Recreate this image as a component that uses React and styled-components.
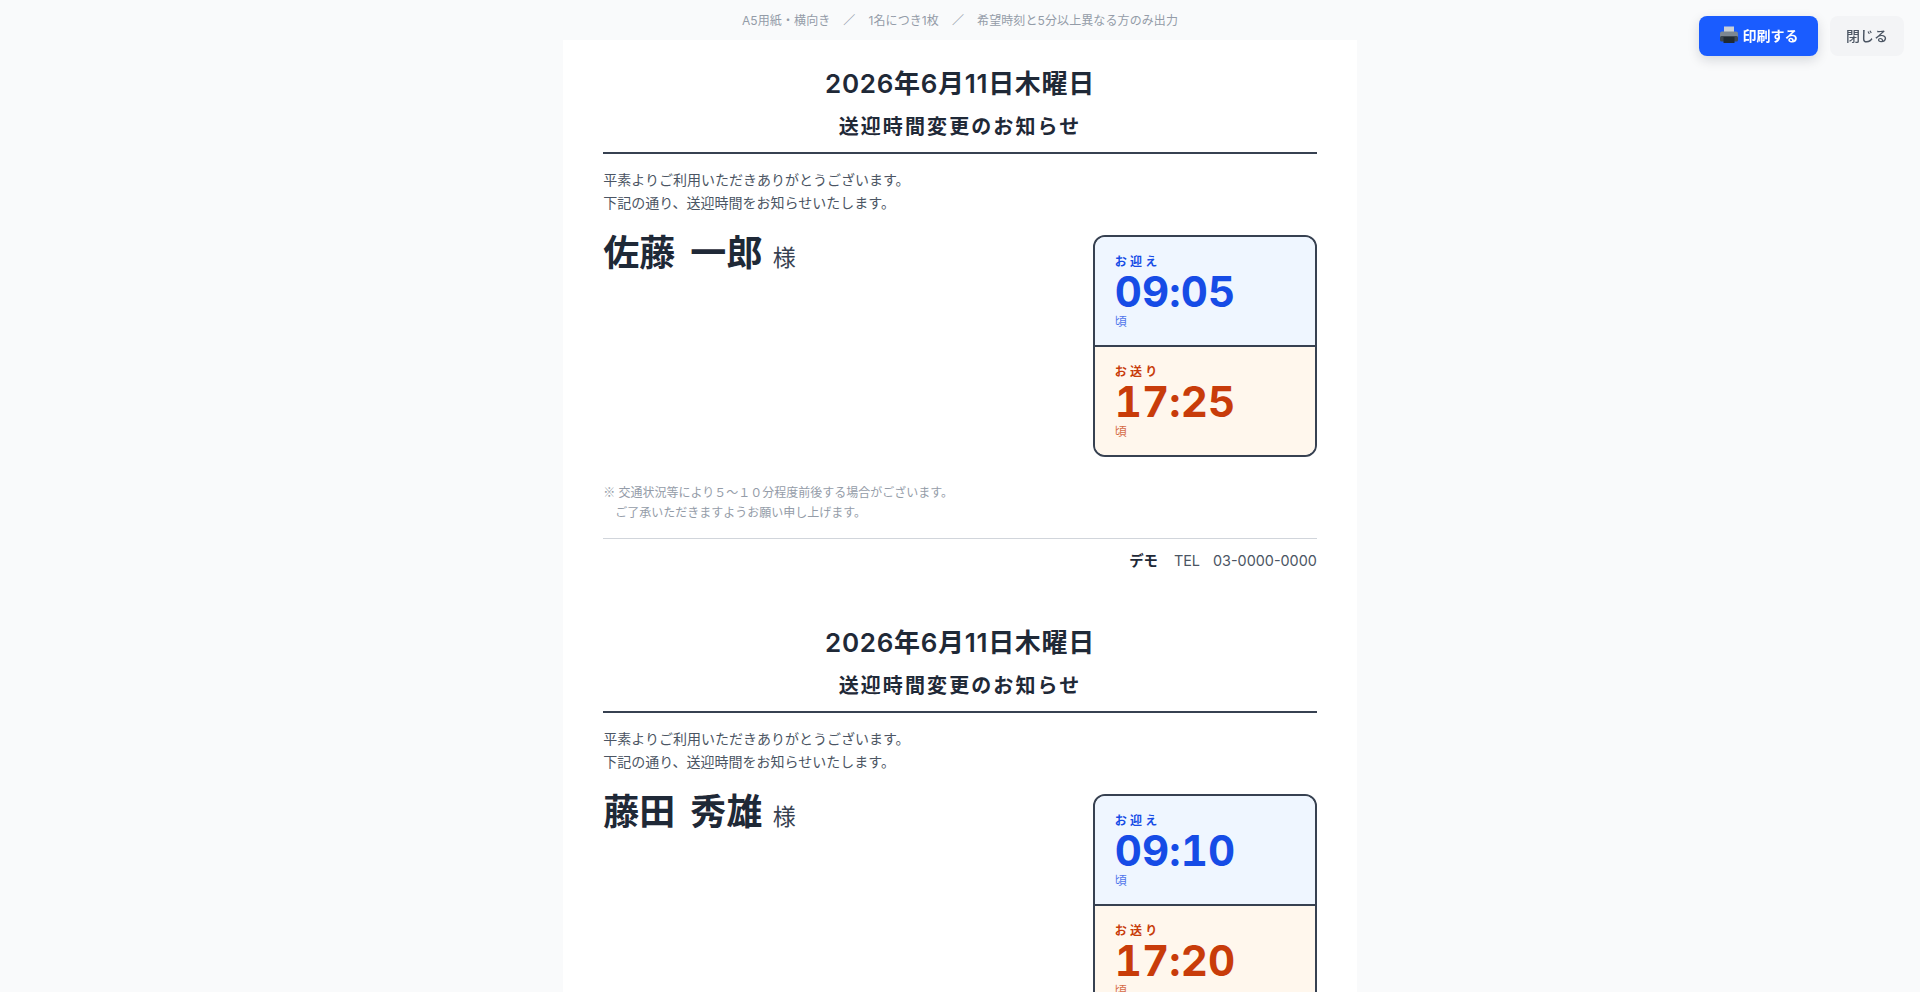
import React from 'react';
import styled, { createGlobalStyle } from 'styled-components';

const GlobalStyle = createGlobalStyle`
  * { box-sizing: border-box; }
  html, body { margin: 0; padding: 0; background: #f9fafb; }
  body {
    font-family: Inter, "Noto Sans CJK JP", sans-serif;
    color: #1f2937;
    overflow: hidden;
    height: 992px;
  }
`;

const Toolbar = styled.div`
  position: fixed;
  top: 16px;
  right: 16px;
  display: flex;
  gap: 12px;
  z-index: 10;
`;

const PrintButton = styled.button`
  height: 40px;
  width: 119px;
  padding: 0 0 2px;
  display: flex;
  align-items: center;
  justify-content: center;
  gap: 4px;
  border: none;
  border-radius: 8px;
  background: #1a5cff;
  color: #fff;
  font: 600 14px Inter, "Noto Sans CJK JP", sans-serif;
  box-shadow: 0 4px 12px rgba(15, 23, 42, 0.15);
`;

const CloseButton = styled.button`
  height: 40px;
  width: 74px;
  padding: 0 0 2px;
  border: none;
  border-radius: 8px;
  background: #f3f4f6;
  color: #4b5563;
  font: 500 14px Inter, "Noto Sans CJK JP", sans-serif;
`;

const Hint = styled.div`
  height: 40px;
  padding-bottom: 2px;
  display: flex;
  align-items: center;
  justify-content: center;
  gap: 13px;
  font-size: 12px;
  letter-spacing: 0.1px;
  color: #949ca8;
`;

const Sheets = styled.main`
  display: flex;
  flex-direction: column;
  align-items: center;
`;

const Sheet = styled.section`
  width: 210mm;
  height: 148mm;
  flex-shrink: 0;
  padding: 26px 40px 0;
  background: #fff;
`;

const DateLine = styled.div`
  text-align: center;
  font-size: 26px;
  line-height: 36px;
  font-weight: 600;
  letter-spacing: 0.7px;
`;

const Title = styled.h1`
  margin: 10px 0 0;
  padding-bottom: 10px;
  border-bottom: 2px solid #374151;
  text-align: center;
  font-size: 20px;
  line-height: 30px;
  font-weight: 700;
  letter-spacing: 2.1px;
`;

const Greeting = styled.p`
  margin: 14px 0 0;
  font-size: 14px;
  line-height: 23px;
  color: #4b5563;
`;

const Body = styled.div`
  display: flex;
  justify-content: space-between;
  align-items: flex-start;
  margin-top: 21px;
`;

const Name = styled.div`
  display: flex;
  align-items: baseline;
  gap: 10px;
  font-size: 36px;
  line-height: 36px;
  font-weight: 700;
  letter-spacing: 0.2px;
  word-spacing: 6px;
`;

const Honorific = styled.span`
  font-size: 23px;
  font-weight: 400;
  color: #374151;
`;

const TimeCard = styled.div`
  width: 224px;
  border: 2px solid #374151;
  border-radius: 12px;
  overflow: hidden;
`;

const TimeBlock = styled.div`
  height: ${({ $last }) => ($last ? '110px' : '108px')};
  padding: 17px 20px 0;
  background: ${({ $tone }) => ($tone === 'blue' ? '#eff6ff' : '#fff7ed')};
  color: ${({ $tone }) => ($tone === 'blue' ? '#164ce6' : '#c83c0a')};
  border-top: ${({ $last }) => ($last ? '2px solid #374151' : 'none')};
`;

const TimeLabel = styled.div`
  font-size: 12px;
  line-height: 16px;
  font-weight: 700;
  letter-spacing: 3.2px;
`;

const TimeValue = styled.div`
  margin-top: 1px;
  font-size: 42px;
  line-height: 42px;
  font-weight: 650;
  font-variant-numeric: tabular-nums;
  letter-spacing: 0.1px;
`;

const TimeSuffix = styled.div`
  margin-top: 1px;
  font-size: 12px;
  line-height: 16px;
  opacity: 0.75;
`;

const Notice = styled.p`
  margin: 25px 0 0;
  font-size: 12px;
  line-height: 20px;
  color: #949ca8;
  white-space: pre;
`;

const NoticeMark = styled.span`
  font-family: "Noto Sans CJK JP", sans-serif;
`;

const Footer = styled.div`
  margin-top: 15px;
  padding-top: 11px;
  border-top: 1px solid #d1d5db;
  display: flex;
  justify-content: flex-end;
  align-items: baseline;
  font-size: 14.4px;
  line-height: 22px;
  color: #4b5563;
`;

const Company = styled.strong`
  margin-right: 16px;
  font-weight: 700;
  color: #1f2937;
`;

const Tel = styled.span`
  margin-right: 13px;
`;

const PrinterIcon = () => (
  <svg width="20" height="20" viewBox="0 0 20 20">
    <rect x="5" y="1.5" width="10" height="6" fill="#cbd0d6" />
    <rect x="1" y="6.5" width="18" height="8.5" rx="2" fill="#7c8792" />
    <rect x="1" y="11" width="18" height="5.5" rx="1.5" fill="#3c4650" />
    <rect x="4.5" y="12" width="11" height="6" fill="#1f2a33" />
  </svg>
);

const notices = [
  { date: '2026年6月11日木曜日', name: '佐藤 一郎', pickup: '09:05', dropoff: '17:25' },
  { date: '2026年6月11日木曜日', name: '藤田 秀雄', pickup: '09:10', dropoff: '17:20' },
];

const NoticeSheet = ({ date, name, pickup, dropoff }) => (
  <Sheet>
    <DateLine>{date}</DateLine>
    <Title>送迎時間変更のお知らせ</Title>
    <Greeting>
      平素よりご利用いただきありがとうございます。
      <br />
      下記の通り、送迎時間をお知らせいたします。
    </Greeting>
    <Body>
      <Name>
        <span>{name}</span>
        <Honorific>様</Honorific>
      </Name>
      <TimeCard>
        <TimeBlock $tone="blue">
          <TimeLabel>お迎え</TimeLabel>
          <TimeValue>{pickup}</TimeValue>
          <TimeSuffix>頃</TimeSuffix>
        </TimeBlock>
        <TimeBlock $tone="orange" $last>
          <TimeLabel>お送り</TimeLabel>
          <TimeValue>{dropoff}</TimeValue>
          <TimeSuffix>頃</TimeSuffix>
        </TimeBlock>
      </TimeCard>
    </Body>
    <Notice>
      <NoticeMark>※</NoticeMark>
      {' 交通状況等により５～１０分程度前後する場合がございます。\n　ご了承いただきますようお願い申し上げます。'}
    </Notice>
    <Footer>
      <Company>デモ</Company>
      <Tel>TEL</Tel>
      <span>03-0000-0000</span>
    </Footer>
  </Sheet>
);

const App = () => (
  <>
    <GlobalStyle />
    <Toolbar>
      <PrintButton>
        <PrinterIcon />
        印刷する
      </PrintButton>
      <CloseButton>閉じる</CloseButton>
    </Toolbar>
    <Hint>
      <span>A5用紙・横向き</span>
      <span>／</span>
      <span>1名につき1枚</span>
      <span>／</span>
      <span>希望時刻と5分以上異なる方のみ出力</span>
    </Hint>
    <Sheets>
      {notices.map((n) => (
        <NoticeSheet key={n.name} {...n} />
      ))}
    </Sheets>
  </>
);

export default App;
